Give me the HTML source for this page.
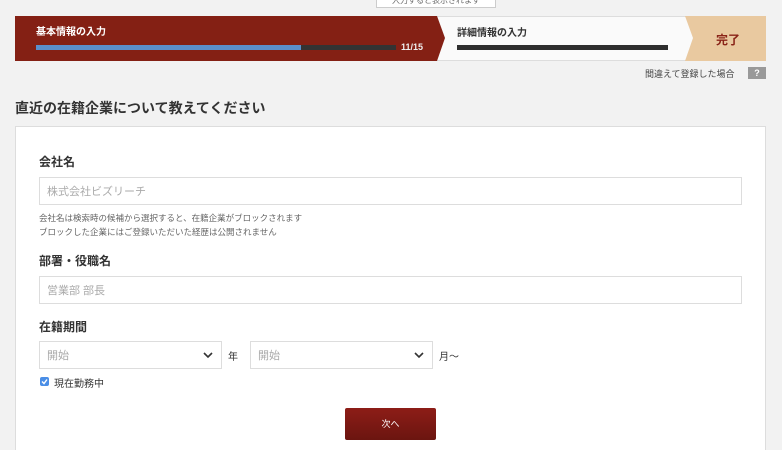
<!DOCTYPE html><html><head><meta charset="utf-8"><style>
*{box-sizing:border-box;margin:0;padding:0}
html,body{width:782px;height:450px;overflow:hidden}
body{background:#f2f2f2;font-family:"Liberation Sans","Noto Sans CJK JP",sans-serif;color:#333;position:relative}
.a{position:absolute}
.inp{position:absolute;background:#fff;border:1px solid #ddd;font-size:11px;color:#aaa;padding-left:7px;display:flex;align-items:center}
.lab{position:absolute;font-size:12px;font-weight:bold;color:#333}
</style></head><body>
<div class="a" style="left:376px;top:-6px;width:120px;height:14px;background:#fff;border:1px solid #ccc;font-size:8px;color:#666;text-align:center;line-height:12px">入力すると表示されます</div>
<div class="a" style="left:15px;top:16px;width:751px;height:45px;background:#fafafa;border:1px solid #ddd"></div>
<svg class="a" style="left:15px;top:16px" width="751" height="45">
<polygon points="670,0 751,0 751,45 670,45 678,22" fill="#e9c9a0"/>
<polygon points="0,0 422,0 430,22 422,45 0,45" fill="#842014"/>
</svg>
<div class="a" style="left:36px;top:23px;font-size:10px;font-weight:bold;color:#fff">基本情報の入力</div>
<div class="a" style="left:36px;top:45px;width:360px;height:5px;background:#333"></div>
<div class="a" style="left:36px;top:45px;width:265px;height:5px;background:#5b8fcb"></div>
<div class="a" style="left:401px;top:42px;font-size:9px;font-weight:bold;color:#eee">11/15</div>
<div class="a" style="left:457px;top:24px;font-size:10px;font-weight:bold;color:#333">詳細情報の入力</div>
<div class="a" style="left:457px;top:45px;width:211px;height:5px;background:#2e2e2e"></div>
<div class="a" style="left:716px;top:31px;font-size:12px;font-weight:bold;color:#8a2418">完了</div>
<div class="a" style="left:645px;top:67px;font-size:9px;color:#444">間違えて登録した場合</div>
<div class="a" style="left:748px;top:67px;width:18px;height:12px;background:#999;color:#fff;font-size:9px;font-weight:bold;text-align:center;line-height:12px">?</div>
<div class="a" style="left:15px;top:98px;font-size:14px;font-weight:bold;color:#333">直近の在籍企業について教えてください</div>
<div class="a" style="left:15px;top:126px;width:751px;height:324px;background:#fff;border:1px solid #ddd;border-bottom:none"></div>
<div class="lab" style="left:39px;top:153px">会社名</div>
<div class="inp" style="left:39px;top:177px;width:703px;height:28px">株式会社ビズリーチ</div>
<div class="a" style="left:39px;top:211px;font-size:8.5px;color:#666;line-height:14px">会社名は検索時の候補から選択すると、在籍企業がブロックされます<br>ブロックした企業にはご登録いただいた経歴は公開されません</div>
<div class="lab" style="left:39px;top:252px">部署・役職名</div>
<div class="inp" style="left:39px;top:276px;width:703px;height:28px">営業部 部長</div>
<div class="lab" style="left:39px;top:318px">在籍期間</div>
<div class="inp" style="left:39px;top:341px;width:183px;height:28px">開始</div>
<div class="inp" style="left:250px;top:341px;width:183px;height:28px">開始</div>
<svg class="a" style="left:203px;top:351px" width="10" height="8"><path d="M1 2l4 4 4-4" stroke="#333" stroke-width="1.6" fill="none"/></svg>
<svg class="a" style="left:414px;top:351px" width="10" height="8"><path d="M1 2l4 4 4-4" stroke="#333" stroke-width="1.6" fill="none"/></svg>
<div class="a" style="left:228px;top:348px;font-size:10px">年</div>
<div class="a" style="left:439px;top:348px;font-size:10px">月〜</div>
<div class="a" style="left:40px;top:377px;width:9px;height:9px;background:#4a8ee6;border-radius:2px"></div>
<svg class="a" style="left:40px;top:377px" width="9" height="9"><path d="M2 4.5l2 2 3-4" stroke="#fff" stroke-width="1.4" fill="none"/></svg>
<div class="a" style="left:54px;top:375px;font-size:10px;color:#333">現在勤務中</div>
<div class="a" style="left:345px;top:408px;width:91px;height:32px;background:linear-gradient(#8d1d17,#6b1510);border-radius:2px;color:#fff;font-size:9px;text-align:center;line-height:32px">次へ</div>
</body></html>
